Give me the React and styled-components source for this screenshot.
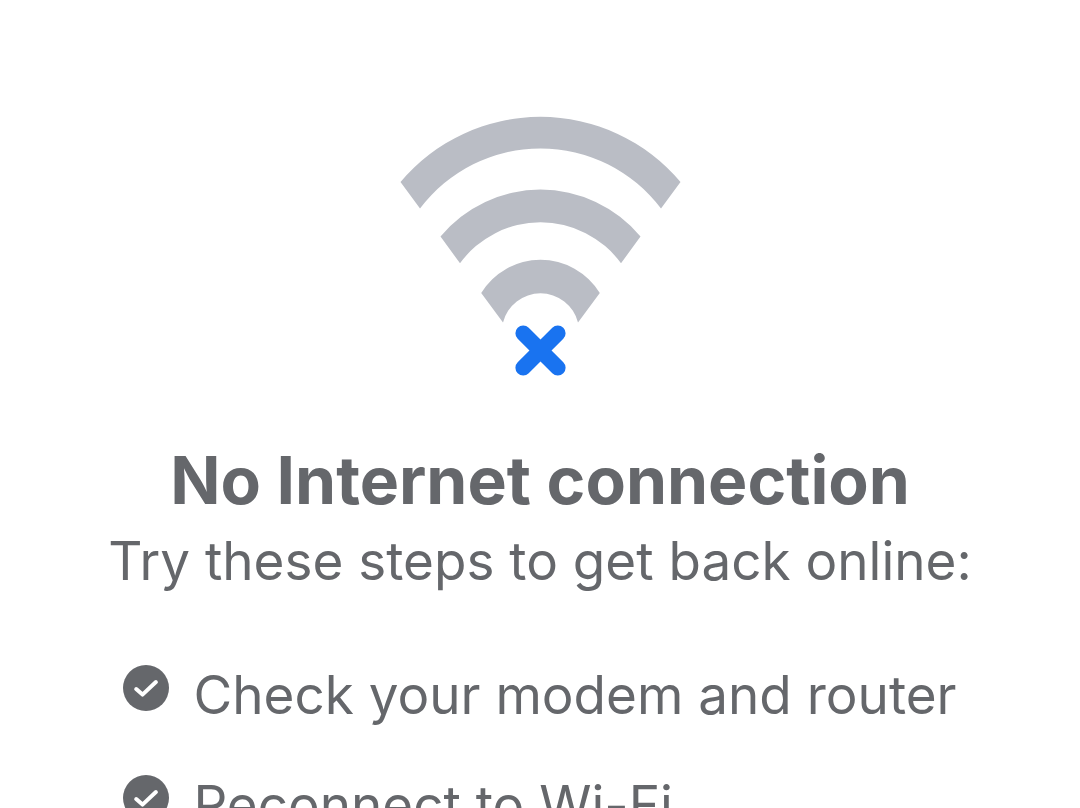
import React from 'react';
import styled, { createGlobalStyle } from 'styled-components';

const GlobalStyle = createGlobalStyle`
  body {
    margin: 0;
    background: #fff;
    color: #65676b;
    font-family: Inter, "Liberation Sans", sans-serif;
  }
`;

const Page = styled.main`
  display: flex;
  flex-direction: column;
  align-items: center;
  height: 100vh;
  padding-top: 116px;
  box-sizing: border-box;
  overflow: hidden;
`;

const WifiIcon = styled.svg`
  flex: none;
  width: 282px;
  height: 262px;
`;

const Title = styled.h1`
  flex: none;
  margin: 60px 0 0;
  font-size: 66px;
  line-height: 84px;
  font-weight: 700;
  white-space: nowrap;
`;

const Subtitle = styled.p`
  flex: none;
  margin: 0;
  font-size: 53px;
  line-height: 78px;
  white-space: nowrap;
`;

const Steps = styled.ul`
  flex: none;
  display: flex;
  flex-direction: column;
  gap: 32px;
  margin: 56px 0 0;
  padding: 0;
  list-style: none;
`;

const Step = styled.li`
  display: flex;
  align-items: flex-start;
  gap: 24px;
  font-size: 53px;
  line-height: 78px;
  white-space: nowrap;
`;

const CheckIcon = styled.svg`
  flex: none;
  width: 46px;
  height: 46px;
  margin-top: 9px;
`;

const steps = ['Check your modem and router', 'Reconnect to Wi-Fi'];

const Check = () => (
  <CheckIcon viewBox="0 0 46 46" aria-hidden="true">
    <circle cx="23" cy="23" r="23" fill="#65676b" />
    <path
      d="M13.2 24 L19.5 29.6 L32.9 17"
      fill="none"
      stroke="#fff"
      strokeWidth="4"
      strokeLinecap="round"
      strokeLinejoin="round"
    />
  </CheckIcon>
);

export default function App() {
  return (
    <Page>
      <GlobalStyle />
      <WifiIcon viewBox="0 0 282 262" aria-hidden="true">
        <g fill="#babdc5">
          <path d="M1.5 66 A183 183 0 0 1 281.5 66 L262 92.5 A151 151 0 0 0 21 92.5 Z" />
          <path d="M41.500 120.5 A130 130 0 0 1 241.5 120.5 L222 147.3 A99.5 99.5 0 0 0 61 147.3 Z" />
          <path d="M82.2 177 A69.5 69.5 0 0 1 200.8 177 L179 206.5 A38.7 38.7 0 0 0 104 206.5 Z" />
        </g>
        <path
          d="M124.200 217.2 L158.8 251.8 M158.8 217.2 L124.2 251.8"
          fill="none"
          stroke="#1973f0"
          strokeWidth="15.6"
          strokeLinecap="round"
        />
      </WifiIcon>
      <Title>No Internet connection</Title>
      <Subtitle>Try these steps to get back online:</Subtitle>
      <Steps>
        {steps.map((step) => (
          <Step key={step}>
            <Check />
            {step}
          </Step>
        ))}
      </Steps>
    </Page>
  );
}
